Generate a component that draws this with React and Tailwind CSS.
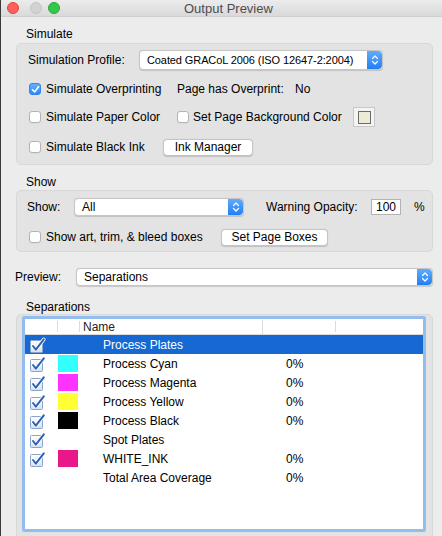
import React from "react";

const rows = [
  { name: "Process Plates", selected: true, check: true },
  { name: "Process Cyan", color: "#33ffff", pct: "0%", check: true },
  { name: "Process Magenta", color: "#ff33ff", pct: "0%", check: true },
  { name: "Process Yellow", color: "#ffff33", pct: "0%", check: true },
  { name: "Process Black", color: "#000000", pct: "0%", check: true },
  { name: "Spot Plates", check: true },
  { name: "WHITE_INK", color: "#e8178a", pct: "0%", check: true },
  { name: "Total Area Coverage", pct: "0%" },
];

function MacCheck({ checked }) {
  if (checked) {
    return (
      <span className="flex h-[12px] w-[12px] shrink-0 items-center justify-center rounded-[3px] border border-[#2f86f0] bg-gradient-to-b from-[#64b1fd] to-[#2a88fb]">
        <svg width="9" height="9" viewBox="0 0 9 9">
          <path d="M1.5 4.8 L3.6 7 L7.6 1.8" fill="none" stroke="#fff" strokeWidth="1.6" strokeLinecap="round" strokeLinejoin="round" />
        </svg>
      </span>
    );
  }
  return <span className="h-[12px] w-[12px] shrink-0 rounded-[3px] border border-[#b5b5b5] bg-white shadow-[0_0.5px_0.5px_rgba(0,0,0,0.08)]" />;
}

function ListCheck() {
  return (
    <svg width="16" height="16" viewBox="0 0 16 16" className="shrink-0">
      <defs>
        <linearGradient id="lc" x1="0" y1="0" x2="0" y2="1">
          <stop offset="0" stopColor="#ffffff" />
          <stop offset="1" stopColor="#d3dff0" />
        </linearGradient>
      </defs>
      <rect x="0.5" y="3.5" width="12" height="12" rx="1" fill="url(#lc)" stroke="#8aa6cc" />
      <path d="M3 9 L5.8 12.6 L13.8 2.4" fill="none" stroke="#ffffff" strokeWidth="3.6" strokeLinecap="round" strokeLinejoin="round" />
      <path d="M3 9 L5.8 12.6 L13.8 2.4" fill="none" stroke="#2a62b0" strokeWidth="2" strokeLinecap="round" strokeLinejoin="round" />
    </svg>
  );
}

function Stepper() {
  return (
    <span className="flex h-full w-[15px] shrink-0 items-center justify-center rounded-r-[4px] bg-gradient-to-b from-[#5fabfd] to-[#1f7ef5]">
      <svg width="8" height="12" viewBox="0 0 8 12">
        <path d="M1.5 4.5 L4 2 L6.5 4.5 M1.5 7.5 L4 10 L6.5 7.5" fill="none" stroke="#fff" strokeWidth="1.3" strokeLinecap="round" strokeLinejoin="round" />
      </svg>
    </span>
  );
}

function Select({ value, className, textClass = "text-[12px]" }) {
  return (
    <div className={`flex items-center overflow-hidden rounded-[4px] border border-[#c6c6c6] bg-white shadow-[0_0.5px_1px_rgba(0,0,0,0.15)] ${className}`}>
      <span className={`flex-1 whitespace-nowrap pl-[7px] leading-none text-black ${textClass}`}>{value}</span>
      <Stepper />
    </div>
  );
}

function Button({ label, className }) {
  return (
    <div className={`flex items-center justify-center rounded-[4px] border border-[#c4c4c4] bg-white text-[12px] leading-none text-black shadow-[0_0.5px_1px_rgba(0,0,0,0.15)] ${className}`}>
      {label}
    </div>
  );
}

export default function App() {
  return (
    <div className="h-[536px] w-[442px] overflow-hidden border-l border-[#3a3a3a] bg-[#ececec] font-['Liberation_Sans',Arial,sans-serif] text-[12px] text-black">
      {/* title bar */}
      <div className="relative flex h-[17px] items-center border-b border-[#cfcfcf] bg-gradient-to-b from-[#ececec] to-[#d9d9d9]">
        <div className="flex items-center gap-[6px] pl-[6px]">
          <span className="h-[12px] w-[12px] rounded-full border border-[#e2463f] bg-[#fc605c]" />
          <span className="ml-[5px] h-[12px] w-[12px] rounded-full border border-[#c4c4c4] bg-[#d2d2d2]" />
          <span className="h-[12px] w-[12px] rounded-full border border-[#27aa35] bg-[#34c84a]" />
        </div>
        <span className="absolute left-[183px] top-[1px] text-[13px] leading-[15px] text-[#4d4d4d]">Output Preview</span>
      </div>

      <div className="pl-[15px] pr-[9px]">
        {/* Simulate */}
        <div className="flex h-[26px] items-end pb-[2px] pl-[10px] leading-[14px]">Simulate</div>
        <div className="rounded-[5px] border border-[#d8d8d8] bg-[#e3e3e3] pb-[2px]">
          <div className="flex h-[32px] items-center pl-[11px]">
            <span className="w-[111px]">Simulation Profile:</span>
            <Select
              value="Coated GRACoL 2006 (ISO 12647-2:2004)"
              className="h-[20px] w-[244px]"
              textClass="text-[11px] tracking-[-0.1px]"
            />
          </div>
          <div className="flex h-[26px] items-center pl-[12px]">
            <MacCheck checked />
            <span className="ml-[5px] w-[131px]">Simulate Overprinting</span>
            <span className="w-[118px]">Page has Overprint:</span>
            <span>No</span>
          </div>
          <div className="flex h-[30px] items-center pl-[12px]">
            <MacCheck />
            <span className="ml-[5px] w-[131px]">Simulate Paper Color</span>
            <MacCheck />
            <span className="ml-[4px] w-[160px]">Set Page Background Color</span>
            <div className="flex h-[20px] w-[22px] items-center justify-center border border-[#c8c8c8] bg-[#f4f4f4]">
              <span className="h-[13px] w-[13px] border border-[#6b6b6b] bg-[#ececd6]" />
            </div>
          </div>
          <div className="flex h-[30px] items-center pl-[12px]">
            <MacCheck />
            <span className="ml-[5px] w-[117px]">Simulate Black Ink</span>
            <Button label="Ink Manager" className="h-[17px] w-[90px]" />
          </div>
        </div>

        {/* Show */}
        <div className="flex h-[25px] items-end pb-[1px] pl-[10px] leading-[14px]">Show</div>
        <div className="rounded-[5px] border border-[#d8d8d8] bg-[#e3e3e3]">
          <div className="flex h-[32px] items-center pl-[10px]">
            <span className="w-[47px]">Show:</span>
            <Select value="All" className="h-[18px] w-[170px]" />
            <span className="ml-[22px] w-[105px]">Warning Opacity:</span>
            <div className="flex h-[16px] w-[30px] items-center justify-center border border-[#b3b3b3] bg-white">100</div>
            <span className="ml-[13px]">%</span>
          </div>
          <div className="flex h-[28px] items-center pl-[12px]">
            <MacCheck />
            <span className="ml-[5px] w-[175px]">Show art, trim, &amp; bleed boxes</span>
            <Button label="Set Page Boxes" className="h-[17px] w-[107px]" />
          </div>
        </div>
      </div>

      {/* Preview */}
      <div className="flex h-[48px] items-center pl-[14px] pr-[9px] pt-[2px]">
        <span className="w-[61px]">Preview:</span>
        <Select value="Separations" className="h-[18px] flex-1" />
      </div>

      <div className="pl-[15px] pr-[9px]">
        <div className="flex h-[14px] items-center pl-[10px] leading-[14px]">Separations</div>
        <div className="h-[230px] rounded-t-[5px] border border-[#d8d8d8] bg-[#e3e3e3] pl-[5px] pr-[6px] pt-[1px]">
          <div className="h-[216px] rounded-[2px] border-[3px] border-[#94bdef] bg-white">
            <div className="flex h-[16px] items-center border-b border-[#dcdcdc] text-[#222]">
              <span className="h-[11px] w-[33px] border-r border-[#dcdcdc]" />
              <span className="h-[11px] w-[22px] border-r border-[#dcdcdc]" />
              <span className="w-[183px] border-r border-[#dcdcdc] pl-[3px] leading-[14px]">Name</span>
              <span className="h-[11px] w-[73px] border-r border-[#dcdcdc]" />
            </div>
            {rows.map((r) => (
              <div
                key={r.name}
                className={`flex h-[19px] items-center ${r.selected ? "bg-[#1668d3] text-white" : "text-black"}`}
              >
                <span className="flex w-[33px] items-center pl-[5px]">{r.check ? <ListCheck /> : null}</span>
                <span className="flex w-[22px] items-center">
                  {r.color ? <span className="h-[17px] w-[20px]" style={{ backgroundColor: r.color }} /> : null}
                </span>
                <span className="w-[183px] pl-[23px]">{r.name}</span>
                <span className="w-[73px] pl-[23px]">{r.pct || ""}</span>
              </div>
            ))}
          </div>
        </div>
      </div>
    </div>
  );
}
